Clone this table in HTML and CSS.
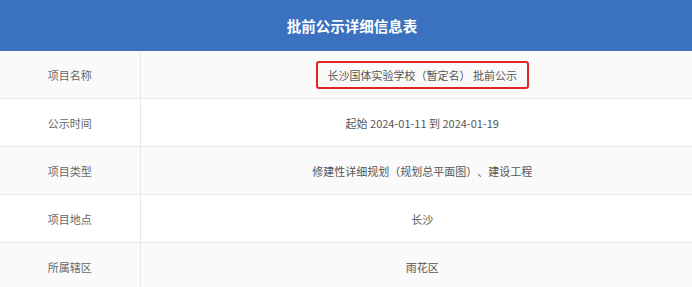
FILE: index.html
```html
<!DOCTYPE html>
<html lang="zh-CN">
<head>
<meta charset="utf-8">
<title>批前公示详细信息表</title>
<link rel="stylesheet" href="styles.css">
</head>
<body>
<div class="sheet">
  <div class="sheet-title">批前公示详细信息表</div>
  <table class="info">
    <colgroup><col class="col-label"><col class="col-value"></colgroup>
    <tbody>
      <tr><th>项目名称</th><td><span class="mark">长沙国体实验学校（暂定名） 批前公示</span></td></tr>
      <tr><th>公示时间</th><td>起始 2024-01-11 到 2024-01-19</td></tr>
      <tr><th>项目类型</th><td>修建性详细规划（规划总平面图）、建设工程</td></tr>
      <tr><th>项目地点</th><td>长沙</td></tr>
      <tr><th>所属辖区</th><td>雨花区</td></tr>
    </tbody>
  </table>
</div>
</body>
</html>
```
FILE: styles.css
```css
html, body {
  margin: 0;
  padding: 0;
  overflow: hidden;
  background: #ffffff;
}
body {
  font-family: "Noto Sans CJK SC", "Noto Sans", "Liberation Sans", sans-serif;
  text-spacing-trim: space-all;
}
.sheet {
  width: 704px;
}
.sheet-title {
  height: 51px;
  background: #3a72bf;
  color: #ffffff;
  font-size: 14.5px;
  font-weight: bold;
  display: flex;
  align-items: center;
  justify-content: center;
}
.info {
  width: 704px;
  border-collapse: collapse;
  table-layout: fixed;
}
.col-label { width: 140px; }
.info th,
.info td {
  height: 47px;
  padding: 0;
  border-bottom: 1px solid #e8e8e8;
  text-align: center;
  font-size: 11px;
  font-weight: normal;
  color: #555555;
}
.info th {
  border-right: 1px solid #e8e8e8;
  color: #666666;
}
.info tr:nth-child(odd) { background: #fafafa; }
.info tr:nth-child(even) { background: #ffffff; }
.mark {
  display: inline-block;
  border: 2px solid #e02424;
  border-radius: 3px;
  padding: 5px 10px;
  line-height: 14px;
}
```
